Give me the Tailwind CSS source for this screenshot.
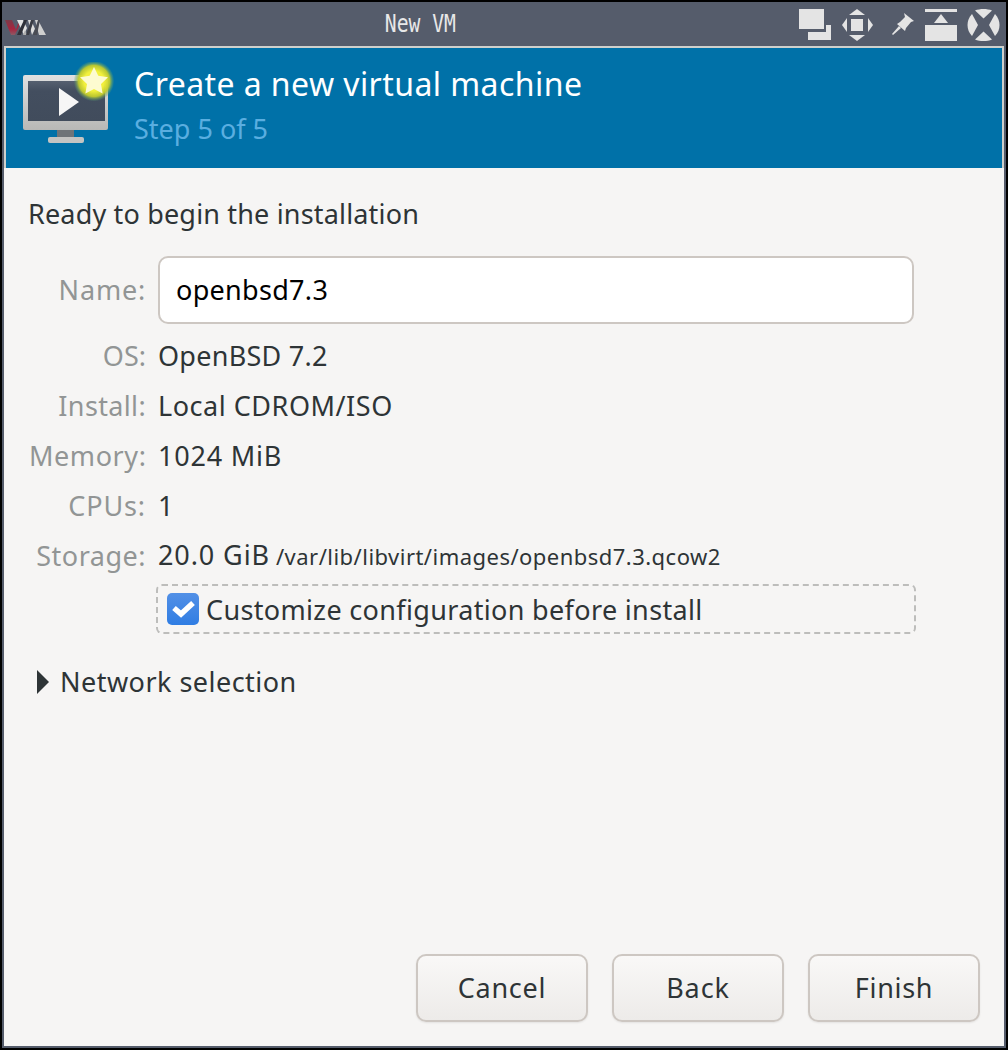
<!DOCTYPE html>
<html>
<head>
<meta charset="utf-8">
<script src="https://cdn.jsdelivr.net/npm/@tailwindcss/browser@4"></script>
</head>
<body class="m-0">
<div class="w-[1008px] h-[1050px] overflow-hidden bg-black p-[2px] font-['Noto_Sans',sans-serif] text-[#2e3436]">
  <div class="w-full h-full flex flex-col bg-[#555c6b] px-[2px] pb-[2px]">
    <div class="h-[44px] shrink-0 flex items-center relative">
      <svg class="absolute left-[1px] top-[16px]" width="44" height="20" viewBox="5 18 44 20">
        <defs>
          <linearGradient id="red" x1="0" y1="0" x2="0" y2="1"><stop offset="0" stop-color="#7a3a48"/><stop offset="0.6" stop-color="#a8243e"/><stop offset="1" stop-color="#8c5a66"/></linearGradient>
        </defs>
        <path d="M5 20h7l4 10 2-7 2 1-5 11h-4z" fill="url(#red)"/>
        <path d="M17 20h6l4 8-3 7z" fill="#e2e2e2"/>
        <path d="M24 20h3l-6 15h-4z" fill="#2e3038"/>
        <path d="M23 35l2-5 2 5z" fill="#b0b0b0"/>
        <path d="M28 20h3l4 9-3 6z" fill="#dcdcdc"/>
        <path d="M31 20h3l-5 15h-3z" fill="#3a3c44"/>
        <path d="M35 20h3l8 15h-7z" fill="#cfcfcf"/>
        <path d="M38 20h2l-3 15h-4z" fill="#4a4c54"/>
      </svg>
      <div class="w-full text-center font-['DejaVu_Sans_Mono',monospace] text-[24px] leading-none text-[#e8e8e8] pr-[168px]"><span class="inline-block scale-x-[0.82]">New VM</span></div>
      <svg class="absolute left-[790px] top-[4px]" width="212" height="38" viewBox="794 6 212 38" fill="#e4e4e4">
        <path d="M799 9h25v20h-25z"/>
        <path d="M808 32h18v-7h5v15h-23z"/>
        <path d="M857 9l8 6h-16z"/>
        <path d="M857 41l8-6h-16z"/>
        <path d="M842 25l5-7v14z"/>
        <path d="M873 25l-5-7v14z"/>
        <path d="M851 19h12v12h-12z"/>
        <path d="M904 13l10 8-3 1-5 6-1 3-8-7 3-2 5-5z"/>
        <path d="M892 34l7-8 2 2-8 7z"/>
        <path d="M925 9h32v3h-32z"/>
        <path d="M941 14l7 9h-14z"/>
        <path d="M925 25h32v16h-32z"/>
        <path d="M975 10.500c5-2 12-2 17 0l-8.500 8z"/>
        <path d="M975 39.500c5 2 12 2 17 0l-8.500-8z"/>
        <path d="M972 14c-6 6-6 16 0 22l6-11z"/>
        <path d="M995 14c6 6 6 16 0 22l-6-11z"/>
      </svg>
    </div>
    <div class="flex-1 flex flex-col min-h-0 bg-[#f6f5f4]">
      <div class="shrink-0 border-x-[2px] border-t-[2px] border-[#cfd0cc] h-[122px] bg-[#0071a8] flex">
        <svg class="ml-[16px] mt-[14px] shrink-0" width="92" height="84" viewBox="22 62 92 84">
          <defs>
            <radialGradient id="glow"><stop offset="0.5" stop-color="#f2f03c"/><stop offset="0.78" stop-color="#c2cc2c" stop-opacity="0.95"/><stop offset="1" stop-color="#4f9a78" stop-opacity="0.15"/></radialGradient>
            <linearGradient id="scr" x1="0" y1="0" x2="0" y2="1"><stop offset="0" stop-color="#566070"/><stop offset="0.25" stop-color="#434e5f"/><stop offset="1" stop-color="#414c5c"/></linearGradient>
            <linearGradient id="bez" x1="0" y1="0" x2="0" y2="1"><stop offset="0" stop-color="#e0e0e0"/><stop offset="1" stop-color="#b8b8b6"/></linearGradient>
          </defs>
          <rect x="23" y="75" width="85" height="55" rx="2" fill="url(#bez)"/>
          <rect x="28" y="81" width="77" height="40" fill="url(#scr)"/>
          <path d="M57 130h17v7H57z" fill="#6f7478"/>
          <rect x="48" y="137" width="36" height="6" rx="2" fill="#c4c4c2"/>
          <path d="M59 88l20 14-20 14z" fill="#f6f6f6"/>
          <circle cx="94" cy="81" r="20" fill="url(#glow)"/>
          <path d="M94 67l4.300 8.800 9.700 1.400-7 6.800 1.600 9.600-8.600-4.500-8.600 4.500 1.600-9.600-7-6.800 9.700-1.400z" fill="#fdfbd0"/>
        </svg>
        <div class="ml-[20px] flex flex-col">
          <div class="text-[32px] leading-[44px] mt-[14px] text-white tracking-[0.43px]">Create a new virtual machine</div>
          <div class="text-[27px] leading-[36px] mt-[5px] text-[#5aaee0]">Step 5 of 5</div>
        </div>
      </div>
      <div class="flex-1 flex flex-col px-[25px] min-h-0">
        <div class="text-[27px] leading-[36px] mt-[28px] -ml-[1px] tracking-[0.17px]">Ready to begin the installation</div>
        <div class="grid grid-cols-[117px_760px] gap-x-[12px] mt-[24px] text-[27px] leading-[36px] items-center">
          <div class="text-right text-[#929595] tracking-[0.8px]">Name:</div>
          <div class="h-[68px] w-[756px] rounded-[10px] border-[2px] border-[#cdc7c2] bg-white text-black flex items-center px-[16px] tracking-[0.3px]">openbsd7.3</div>
          <div class="text-right text-[#929595] mt-[14px]">OS:</div>
          <div class="mt-[14px] tracking-[0.27px]">OpenBSD 7.2</div>
          <div class="text-right text-[#929595] mt-[14px] tracking-[0.35px]">Install:</div>
          <div class="mt-[14px] tracking-[0.53px]">Local CDROM/ISO</div>
          <div class="text-right text-[#929595] mt-[14px] tracking-[0.57px]">Memory:</div>
          <div class="mt-[14px] tracking-[0.8px]">1024 MiB</div>
          <div class="text-right text-[#929595] mt-[14px] tracking-[0.9px]">CPUs:</div>
          <div class="mt-[14px]">1</div>
          <div class="text-right text-[#929595] mt-[13px] tracking-[0.5px]">Storage:</div>
          <div class="mt-[13px] flex items-baseline gap-[6px]"><span class="tracking-[0.9px]">20.0 GiB</span><span class="text-[22px] tracking-[0.47px]">/var/lib/libvirt/images/openbsd7.3.qcow2</span></div>
          <div></div>
          <div class="mt-[10px] h-[50px] w-[760px] rounded-[6px] border-[2px] border-dashed border-[#bdbdbb] flex items-center pl-[9px] -ml-[2px]">
            <span class="w-[32px] h-[32px] rounded-[5px] bg-gradient-to-b from-[#5290e6] to-[#2f7de3] flex items-center justify-center shrink-0">
              <svg width="32" height="32" viewBox="0 0 32 32"><path d="M7 15l7 6 12-11" fill="none" stroke="#fff" stroke-width="5.500"/></svg>
            </span>
            <span class="ml-[7px] pt-[2px] tracking-[0.34px]">Customize configuration before install</span>
          </div>
        </div>
        <div class="flex items-center mt-[30px] ml-[8px] text-[27px] leading-[36px]">
          <svg width="12" height="24" viewBox="0 0 12 24"><path d="M0 0l12 12L0 24z" fill="#2e3436"/></svg>
          <span class="ml-[11px] tracking-[0.47px]">Network selection</span>
        </div>
        <div class="flex-1"></div>
        <div class="flex justify-end gap-[24px] mb-[24px] -mr-[1px] text-[27px] leading-[36px]">
          <div class="w-[172px] h-[68px] rounded-[10px] border-[2px] border-[#cdc7c2] bg-gradient-to-b from-[#f9f8f7] to-[#edebe9] shadow-[0_1px_2px_rgba(0,0,0,0.08)] flex items-center justify-center tracking-[0.7px]">Cancel</div>
          <div class="w-[172px] h-[68px] rounded-[10px] border-[2px] border-[#cdc7c2] bg-gradient-to-b from-[#f9f8f7] to-[#edebe9] shadow-[0_1px_2px_rgba(0,0,0,0.08)] flex items-center justify-center tracking-[0.9px]">Back</div>
          <div class="w-[172px] h-[68px] rounded-[10px] border-[2px] border-[#cdc7c2] bg-gradient-to-b from-[#f9f8f7] to-[#edebe9] shadow-[0_1px_2px_rgba(0,0,0,0.08)] flex items-center justify-center tracking-[0.7px]">Finish</div>
        </div>
      </div>
    </div>
  </div>
</div>
</body>
</html>
